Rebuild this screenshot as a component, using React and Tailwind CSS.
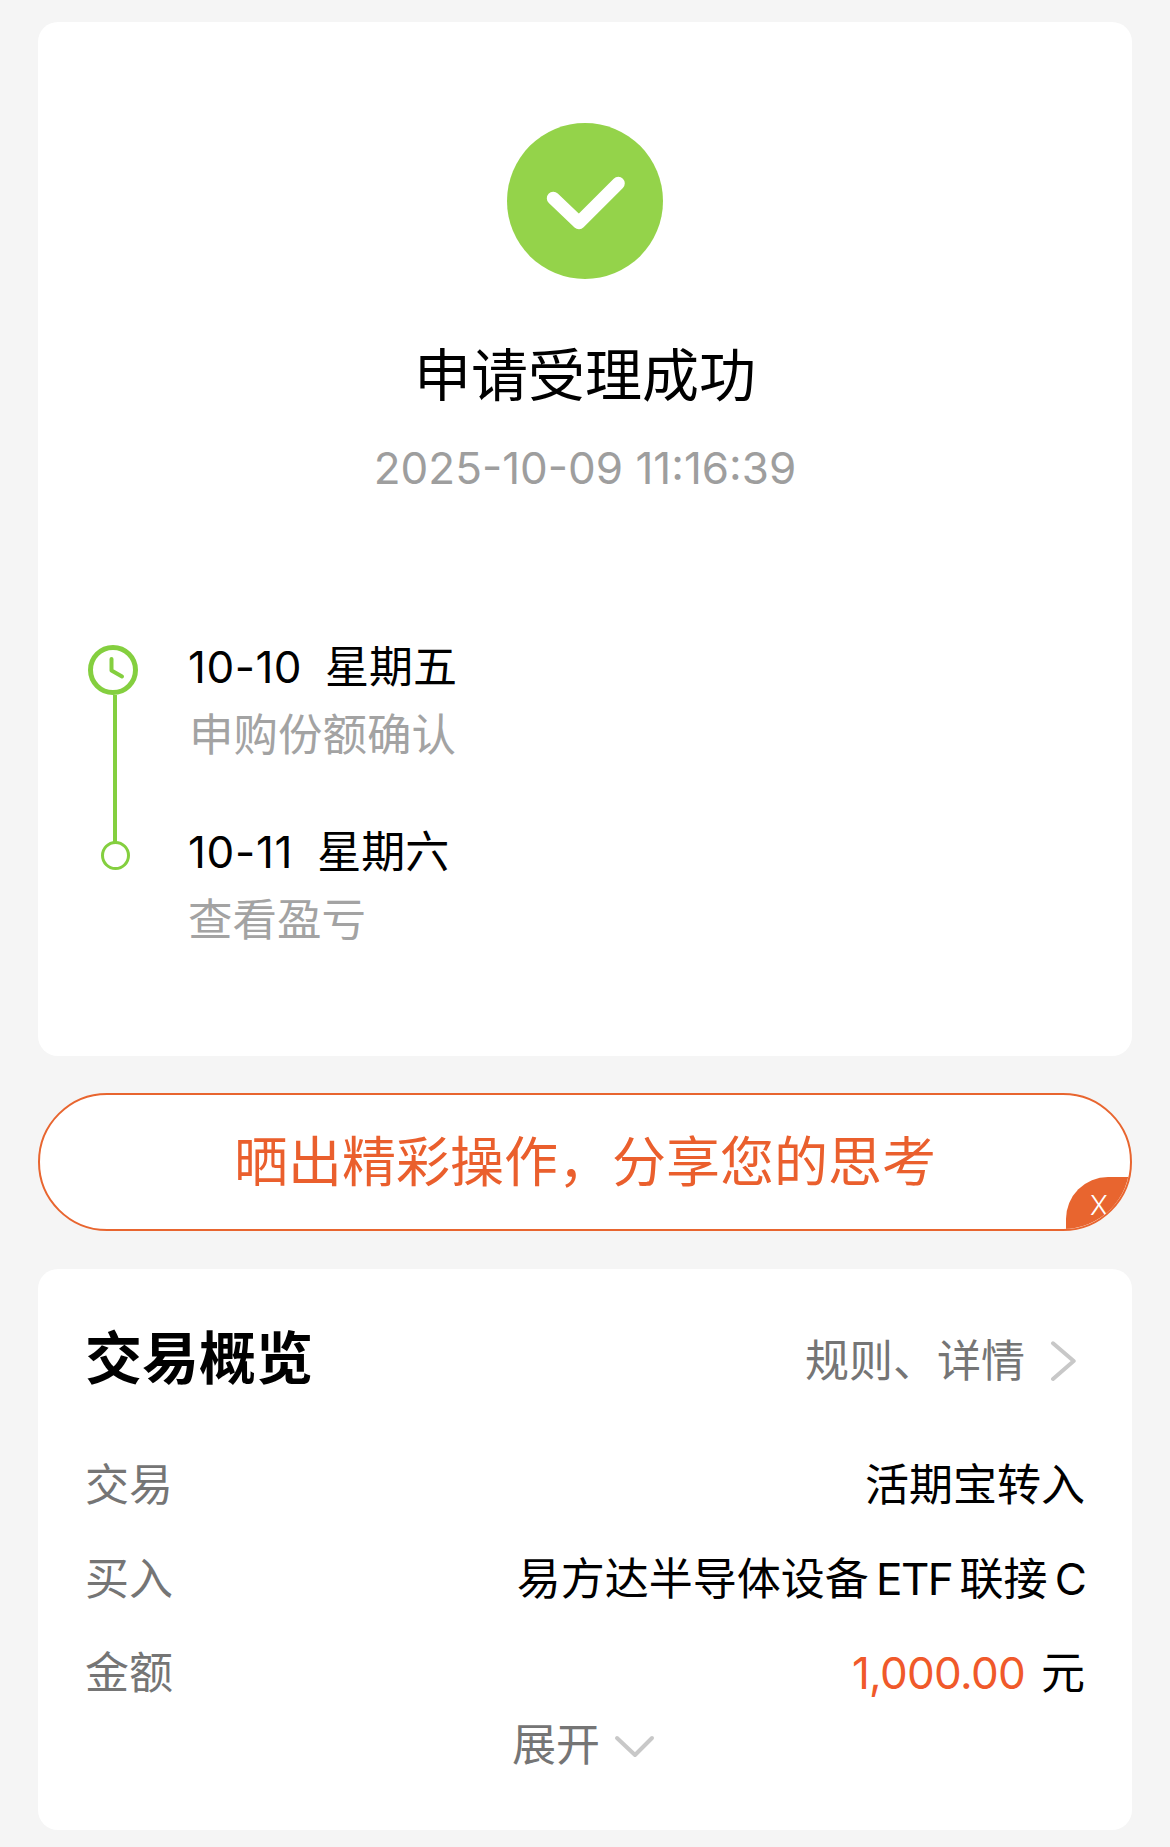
const font = { fontFamily: 'Inter, "Noto Sans CJK SC", sans-serif' }

const rows = [
  { label: '交易', value: '活期宝转入' },
  {
    label: '买入',
    value: (
      <span className="-mr-[2px] [word-spacing:-5px]">
        易方达半导体设备 <span className="tracking-[-1.6px]">ETF</span> 联接 C
      </span>
    ),
  },
]

export default function App() {
  return (
    <div className="flex min-h-[1847px] flex-col gap-[38px] bg-[#f5f5f5] px-[38px] pt-[22px] pb-[17px]" style={font}>
      {/* Result card */}
      <section className="rounded-[20px] bg-white pt-[101px] pb-[110px]">
        <div className="mx-auto h-[156px] w-[156px]">
          <svg viewBox="0 0 156 156" className="h-full w-full">
            <circle cx="78" cy="78" r="78" fill="#94d34a" />
            <path d="M46.3 75.3 L72 99.7 L111.3 60.3" fill="none" stroke="#fff" strokeWidth="13" strokeLinecap="round" strokeLinejoin="round" />
          </svg>
        </div>
        <h1 className="mt-[64px] text-center text-[57px] leading-[66px] font-normal text-black">申请受理成功</h1>
        <p className="mt-[33px] text-center text-[44px] leading-[52px] text-[#9e9e9e]">2025-10-09 11:16:39</p>

        <div className="mt-[147px] flex pl-[50px]">
          <div className="w-[100px] shrink-0 pt-1">
            <svg viewBox="0 0 50 50" className="h-[50px] w-[50px]">
              <circle cx="25" cy="25" r="22.5" fill="none" stroke="#84cf3f" strokeWidth="5" />
              <path d="M23.5 14 V25.5 L34 31.5" fill="none" stroke="#84cf3f" strokeWidth="4" strokeLinecap="round" strokeLinejoin="round" />
            </svg>
            <div className="ml-[25px] h-[147px] w-1 bg-[#84cf3f]" />
            <div className="-mt-px ml-[13px] h-[29px] w-[29px] rounded-full border-[3px] border-[#84cf3f]" />
          </div>
          <div>
            <p className="text-[44px] leading-[52px] text-black"><span className="tracking-[0.5px]">10-10</span><span className="ml-[23px]">星期五</span></p>
            <p className="mt-4 pl-px text-[44.5px] leading-[52px] text-[#a3a3a3]">申购份额确认</p>
            <p className="mt-[65px] text-[44px] leading-[52px] text-black"><span className="tracking-[0.7px]">10-11</span><span className="ml-[24px]">星期六</span></p>
            <p className="mt-4 text-[44.5px] leading-[52px] text-[#a3a3a3]">查看盈亏</p>
          </div>
        </div>
      </section>

      {/* Share banner */}
      <div className="relative -mt-px flex h-[138px] items-center justify-center overflow-hidden rounded-full border-2 border-[#e8652f] bg-white pt-[2px]">
        <span className="text-[54px] leading-[64px] text-[#ea5f2d]">晒出精彩操作，分享您的思考</span>
        <div className="absolute right-0 bottom-0 flex h-[52px] w-[64px] items-center justify-center rounded-tl-[42px] bg-[#e8652f] pt-1 pl-0.5 text-[27px] leading-none font-light text-white">X</div>
      </div>

      {/* Transaction overview */}
      <section className="rounded-[20px] bg-white px-[47px] pt-[57px] pb-[59px]">
        <div className="flex items-center justify-between">
          <h2 className="text-[57px] leading-[66px] font-bold text-black">交易概览</h2>
          <div className="flex items-center pt-1 pr-[9px]">
            <span className="text-[44px] leading-[52px] text-[#757575]">规则、详情</span>
            <svg viewBox="0 0 26 42" className="ml-[25px] h-[42px] w-[26px]">
              <path d="M3 3.3 L23.7 21 L3 39" fill="none" stroke="#c8c8c8" strokeWidth="4" strokeLinecap="round" strokeLinejoin="round" />
            </svg>
          </div>
        </div>

        <div className="mt-[67px] flex flex-col gap-[42px]">
          {rows.map((row) => (
            <div key={row.label} className="flex justify-between text-[44px] leading-[52px]">
              <span className="text-[#757575]">{row.label}</span>
              <span className="whitespace-nowrap text-black">{row.value}</span>
            </div>
          ))}
          <div className="flex justify-between text-[44px] leading-[52px]">
            <span className="text-[#757575]">金额</span>
            <span className="text-black"><span className="tracking-[-0.7px] text-[#f0592a]">1,000.00</span><span className="ml-4">元</span></span>
          </div>
        </div>

        <div className="mt-[20px] flex items-center justify-center pr-[3px]">
          <span className="text-[44px] leading-[52px] text-[#757575]">展开</span>
          <svg viewBox="0 0 41 24" className="mt-1 ml-[14px] h-[24px] w-[41px]">
            <path d="M3 3 L21 20 L38 3" fill="none" stroke="#c8c8c8" strokeWidth="4" strokeLinecap="round" strokeLinejoin="round" />
          </svg>
        </div>
      </section>
    </div>
  )
}
